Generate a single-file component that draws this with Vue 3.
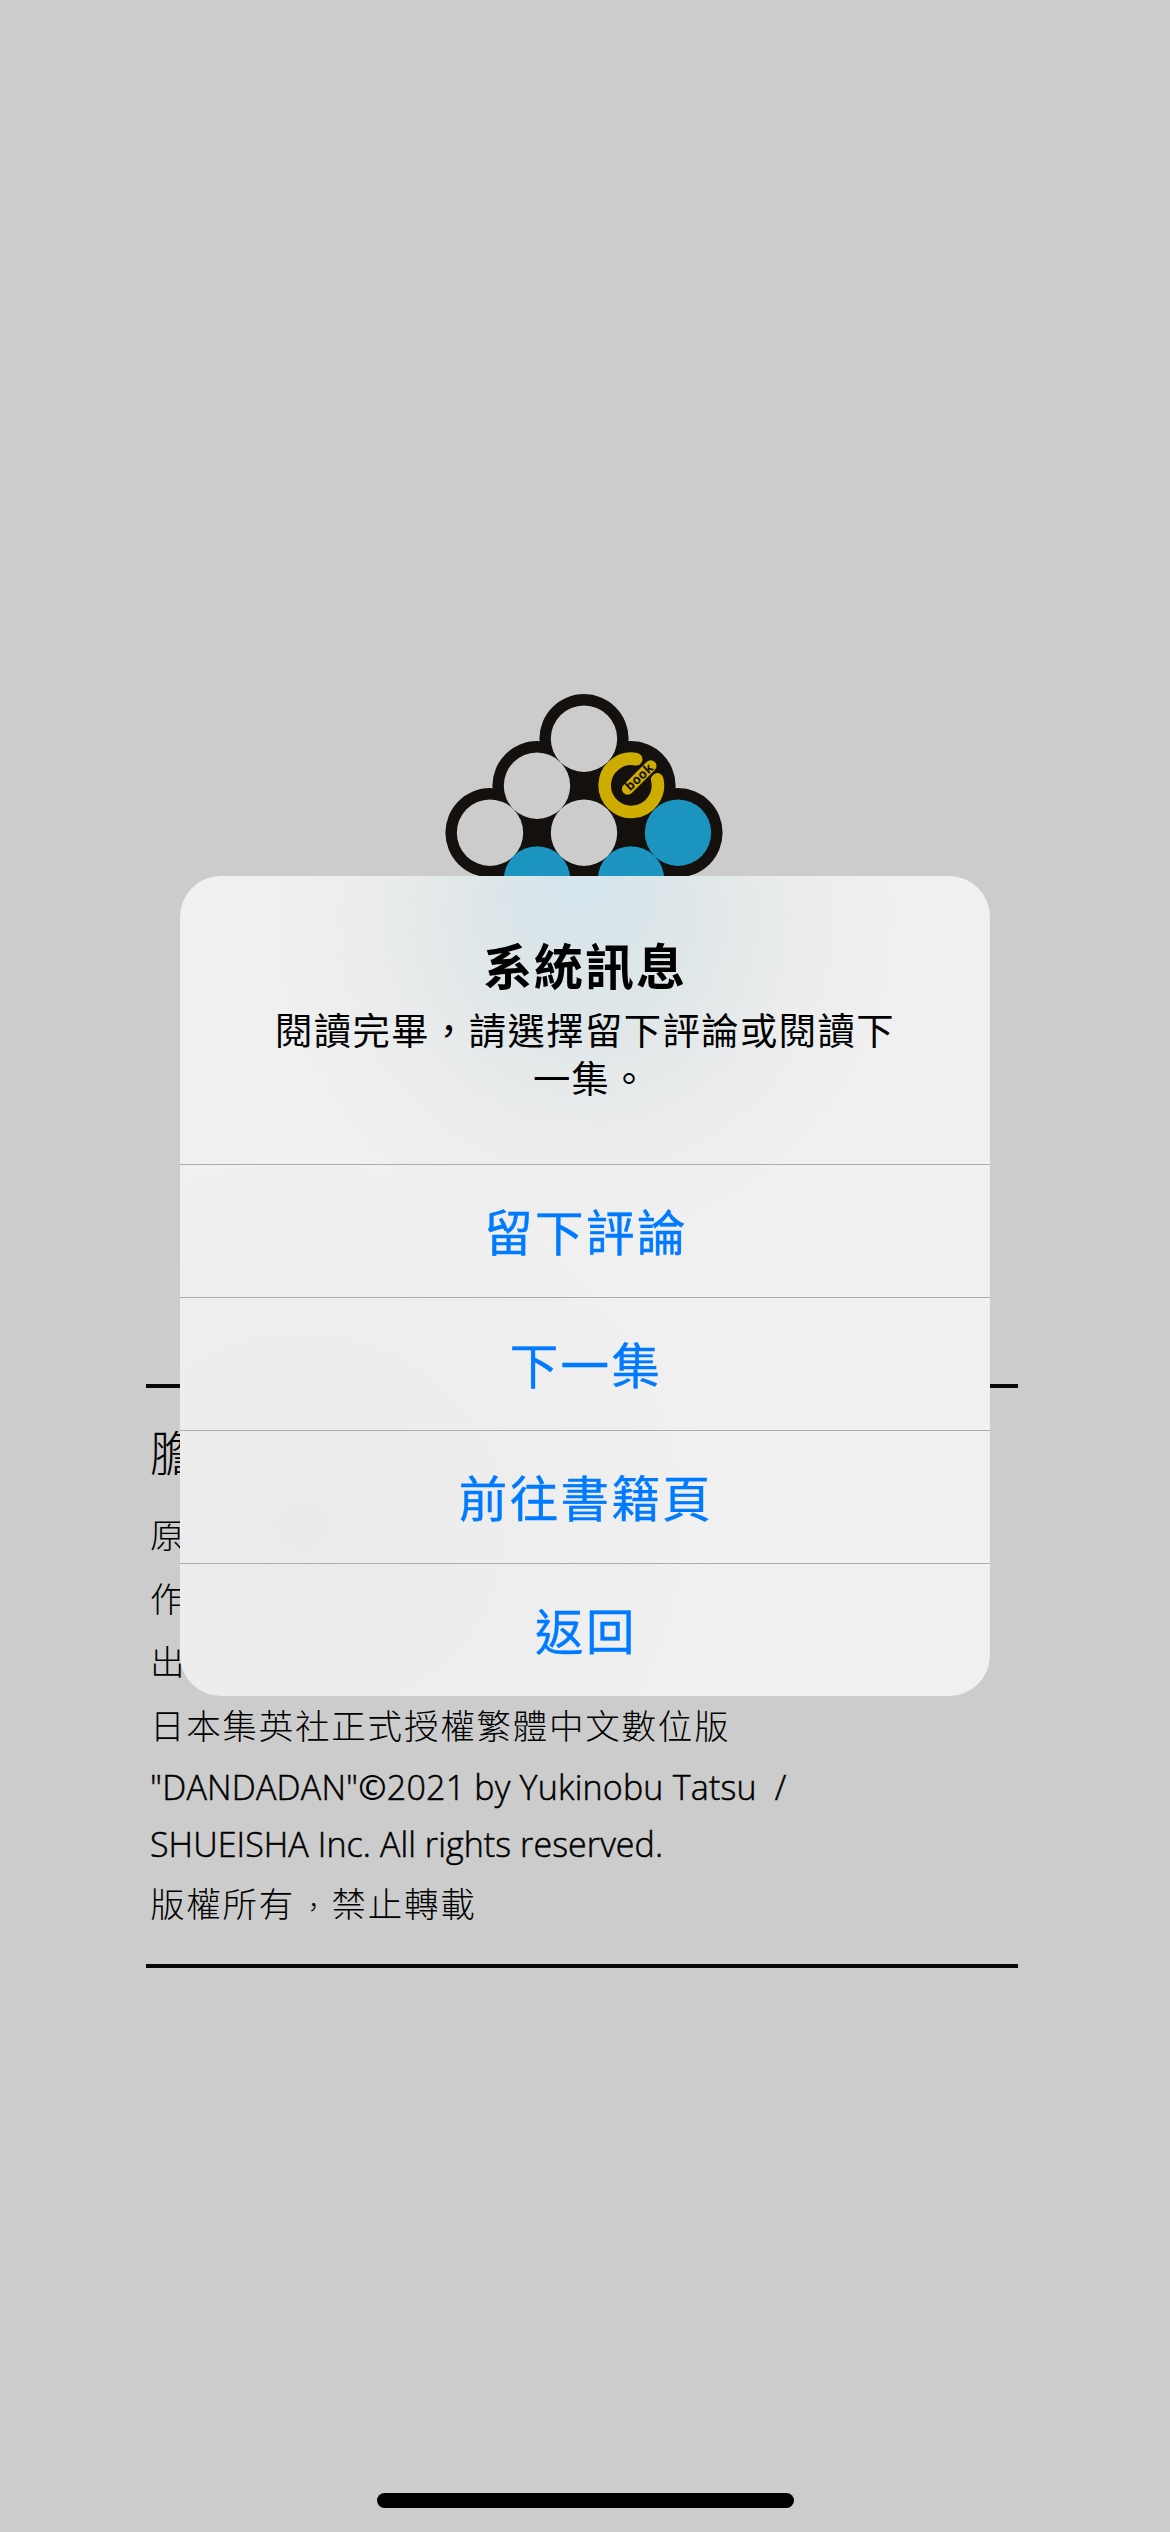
<script setup>
const discs = [
  { x: 584, y: 738.7, fill: '#cccccc' },
  { x: 537, y: 785.7, fill: '#cccccc' },
  { x: 490, y: 832.7, fill: '#cccccc' },
  { x: 584, y: 832.7, fill: '#cccccc' },
  { x: 678, y: 832.7, fill: '#1b94c0' },
  { x: 537, y: 879.5, fill: '#1b94c0' },
  { x: 631, y: 879.5, fill: '#1b94c0' },
]
const rims = [...discs, { x: 631, y: 785.7 }]
const actions = ['留下評論', '下一集', '前往書籍頁', '返回']
</script>

<template>
  <div class="screen">
    <main class="page">
      <svg class="logo" viewBox="440 690 290 230" width="290" height="230">
        <circle v-for="(c, i) in rims" :key="'r' + i" :cx="c.x" :cy="c.y" r="44.6" fill="#14100d" />
        <rect x="520" y="765" width="128" height="110" fill="#14100d" />
        <circle v-for="(c, i) in discs" :key="'d' + i" :cx="c.x" :cy="c.y" r="33.2" :fill="c.fill" />
        <path d="M636.2 759.2 A26.6 26.6 0 1 0 657.2 779.4" fill="none" stroke="#ceac00" stroke-width="12.6" stroke-linecap="round" />
        <path d="M627.7 789 L650.7 766" stroke="#14100d" stroke-width="16" stroke-linecap="round" />
        <path d="M627.7 789 L650.7 766" stroke="#ceac00" stroke-width="11.6" stroke-linecap="round" />
        <text class="book" transform="translate(639.4 777.4) rotate(-43)" text-anchor="middle" y="4" textLength="33">book</text>
      </svg>
      <section class="colophon">
        <h2>膽</h2>
        <p>原</p>
        <p>作</p>
        <p>出</p>
        <p>日本集英社正式授權繁體中文數位版</p>
        <p class="latin first">"DANDADAN"<b>©</b>2021 by Yukinobu Tatsu&nbsp; /</p>
        <p class="latin second">SHUEISHA Inc. All rights reserved.</p>
        <p class="rights">版權所有<span class="comma">，</span>禁止轉載</p>
      </section>
    </main>
    <div class="alert" role="dialog">
      <header>
        <h1>系統訊息</h1>
        <p>閱讀完畢，請選擇留下評論或閱讀下</p>
        <p class="last">一集。</p>
      </header>
      <button v-for="a in actions" :key="a" type="button">{{ a }}</button>
    </div>
    <div class="home"></div>
  </div>
</template>

<style>
body {
  margin: 0;
  background: #ccc;
}
</style>

<style scoped>
.screen {
  position: relative;
  width: 1170px;
  height: 2532px;
  overflow: hidden;
  background: #ccc;
  font-family: "Noto Sans CJK TC", sans-serif;
  display: flex;
  flex-direction: column;
  justify-content: space-between;
  align-items: center;
}
.page {
  width: 1170px;
  padding-top: 690px;
}
.logo {
  display: block;
  margin-left: 440px;
}
.book {
  font: 700 13px "Open Sans", sans-serif;
  fill: #14100d;
}
.colophon {
  box-sizing: border-box;
  width: 872px;
  height: 584px;
  margin: 464px 0 0 146px;
  padding: 25px 0 0 4px;
  border-top: 4px solid #080808;
  border-bottom: 4px solid #080808;
  color: #000;
}
.colophon h2 {
  margin: 0 0 15px;
  font-size: 48px;
  font-weight: 300;
  line-height: 74px;
}
.colophon p {
  margin: 0;
  font-size: 34.5px;
  font-weight: 300;
  line-height: 63.5px;
  letter-spacing: 1.77px;
  white-space: nowrap;
}
.colophon .latin {
  font-family: "Open Sans", "Noto Sans", sans-serif;
  font-size: 34px;
  font-weight: 350;
  line-height: 57px;
  letter-spacing: 0.2px;
  -webkit-text-stroke: 0.5px #000;
}
.colophon .first {
  padding-top: 3px;
}
.colophon .second {
  letter-spacing: 0.08px;
}
.colophon .rights {
  margin-top: -2px;
}
.comma {
  font-size: 26px;
  padding: 0 3px 0 5.5px;
}
.latin b {
  font-weight: 600;
  -webkit-text-stroke: 0;
}
.alert {
  position: absolute;
  left: 180px;
  top: 876px;
  width: 810px;
  height: 820px;
  overflow: hidden;
  border-radius: 41px;
  background:
    radial-gradient(ellipse 110px 100px at 398px 0, #d6e5ee 0, rgba(216, 229, 236, 0) 100%),
    radial-gradient(ellipse 320px 330px at 405px 40px, #dae5e8 0, rgba(220, 229, 231, 0.9) 30%, rgba(229, 232, 233, 0.5) 65%, rgba(240, 240, 240, 0) 100%),
    radial-gradient(ellipse at 120px 650px, #ebebeb 0, rgba(240, 240, 240, 0) 420px),
    #f0f0f0;
}
header {
  height: 288px;
  text-align: center;
  color: #000;
}
h1 {
  margin: 0 0 4px;
  padding-top: 51px;
  font-size: 49px;
  line-height: 74px;
  font-weight: 700;
  letter-spacing: 1.9px;
}
header p {
  margin: 0;
  font-size: 37.3px;
  font-weight: 400;
  line-height: 48px;
  letter-spacing: 1.45px;
}
header .last {
  padding-left: 12px;
}
button {
  display: block;
  width: 100%;
  height: 133px;
  padding: 0 0 2px 2px;
  border: 0;
  border-top: 1px solid #adadad;
  background: none;
  color: #007aff;
  font: 400 48.5px/130px "Noto Sans CJK TC", sans-serif;
  letter-spacing: 2.4px;
  -webkit-text-stroke: 0.4px #007aff;
}
.home {
  flex: none;
  width: 417px;
  height: 15px;
  margin-bottom: 24px;
  border-radius: 8px;
  background: #000;
}
</style>
